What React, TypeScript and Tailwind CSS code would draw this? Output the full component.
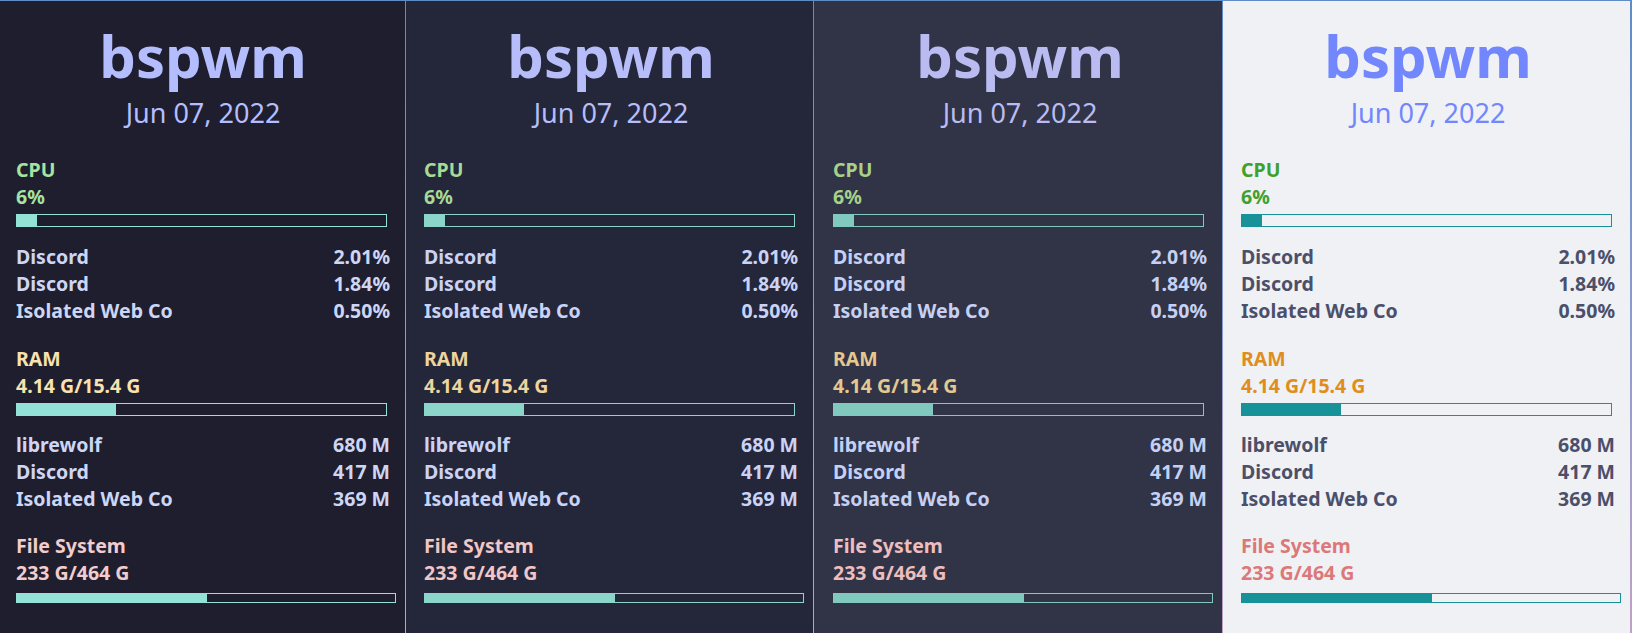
import React from "react";

type Theme = {
  bg: string;
  title: string;
  green: string;
  yellow: string;
  fs: string;
  text: string;
  barFill: string;
  barBorder: string;
  width: string;
  pl: string;
};

const themes: Theme[] = [
  {
    bg: "bg-[#1e1e2e]",
    title: "text-[#b4befe]",
    green: "text-[#a6e3a1]",
    yellow: "text-[#f9e2af]",
    fs: "text-[#f2cdcd]",
    text: "text-[#cdd6f4]",
    barFill: "bg-[#94e2d5]",
    barBorder: "border-[#94e2d5]",
    width: "w-[405px]",
    pl: "pl-[16px]",
  },
  {
    bg: "bg-[#24273a]",
    title: "text-[#b7bdf8]",
    green: "text-[#a6da95]",
    yellow: "text-[#eed49f]",
    fs: "text-[#f0c6c6]",
    text: "text-[#cad3f5]",
    barFill: "bg-[#8bd5ca]",
    barBorder: "border-[#8bd5ca]",
    width: "w-[407px]",
    pl: "pl-[18px]",
  },
  {
    bg: "bg-[#303446]",
    title: "text-[#babbf1]",
    green: "text-[#a6d189]",
    yellow: "text-[#e5c890]",
    fs: "text-[#eebebe]",
    text: "text-[#c6d0f5]",
    barFill: "bg-[#81c8be]",
    barBorder: "border-[#81c8be]",
    width: "w-[408px]",
    pl: "pl-[19px]",
  },
  {
    bg: "bg-[#eff1f5]",
    title: "text-[#7287fd]",
    green: "text-[#40a02b]",
    yellow: "text-[#df8e1d]",
    fs: "text-[#dd7878]",
    text: "text-[#4c4f69]",
    barFill: "bg-[#179299]",
    barBorder: "border-[#179299]",
    width: "w-[407px]",
    pl: "pl-[18px]",
  },
];

function Bar({
  t,
  pct,
  wide,
}: {
  t: Theme;
  pct: number;
  wide?: boolean;
}) {
  return (
    <div
      className={`${wide ? "w-[380px] h-[10px]" : "w-[371px] h-[13px]"} border ${t.barBorder} flex`}
    >
      <div className={`${t.barFill} h-full`} style={{ width: `${pct}%` }} />
    </div>
  );
}

function Row({ t, name, value }: { t: Theme; name: string; value: string }) {
  return (
    <div className={`flex justify-between ${t.text}`}>
      <span>{name}</span>
      <span>{value}</span>
    </div>
  );
}

function Panel({ t }: { t: Theme }) {
  return (
    <div className={`${t.width} ${t.pl} ${t.bg} h-[632px] shrink-0 flex flex-col`}>
      <div className="w-[374px] flex flex-col text-[19.5px] leading-[27px] font-bold">
        <div
          className={`${t.title} text-center text-[58px] leading-[58px] font-bold mt-[26px]`}
        >
          bspwm
        </div>
        <div
          className={`${t.title} text-center text-[27px] leading-[36px] font-normal mt-[10px]`}
        >
          Jun 07, 2022
        </div>

        <div className={`${t.green} mt-[25px]`}>CPU</div>
        <div className={t.green}>6%</div>
        <div className="mt-[4px]">
          <Bar t={t} pct={5.5} />
        </div>
        <div className="mt-[16px]">
          <Row t={t} name="Discord" value="2.01%" />
          <Row t={t} name="Discord" value="1.84%" />
          <Row t={t} name="Isolated Web Co" value="0.50%" />
        </div>

        <div className={`${t.yellow} mt-[21px]`}>RAM</div>
        <div className={t.yellow}>4.14 G/15.4 G</div>
        <div className="mt-[4px]">
          <Bar t={t} pct={26.7} />
        </div>
        <div className="mt-[15px]">
          <Row t={t} name="librewolf" value="680 M" />
          <Row t={t} name="Discord" value="417 M" />
          <Row t={t} name="Isolated Web Co" value="369 M" />
        </div>

        <div className={`${t.fs} mt-[20px]`}>File System</div>
        <div className={t.fs}>233 G/464 G</div>
        <div className="mt-[7px]">
          <Bar t={t} pct={50.2} wide />
        </div>
      </div>
    </div>
  );
}

function Divider({ wide }: { wide?: boolean }) {
  return (
    <div
      className={`${wide ? "w-[2px]" : "w-[1px]"} h-[632px] shrink-0 bg-gradient-to-b from-[#5f8cc6] via-[#8a9cd0] to-[#c0a0c4]`}
    />
  );
}

export default function App() {
  return (
    <div
      className="w-[1632px] h-[633px] overflow-hidden flex flex-col"
      style={{ fontFamily: '"Noto Sans", "Open Sans", sans-serif' }}
    >
      <div className="h-[1px] w-full bg-[#5f8cc6] shrink-0" />
      <div className="flex">
        <Panel t={themes[0]} />
        <Divider />
        <Panel t={themes[1]} />
        <Divider />
        <Panel t={themes[2]} />
        <Divider />
        <Panel t={themes[3]} />
        <Divider wide />
      </div>
    </div>
  );
}
